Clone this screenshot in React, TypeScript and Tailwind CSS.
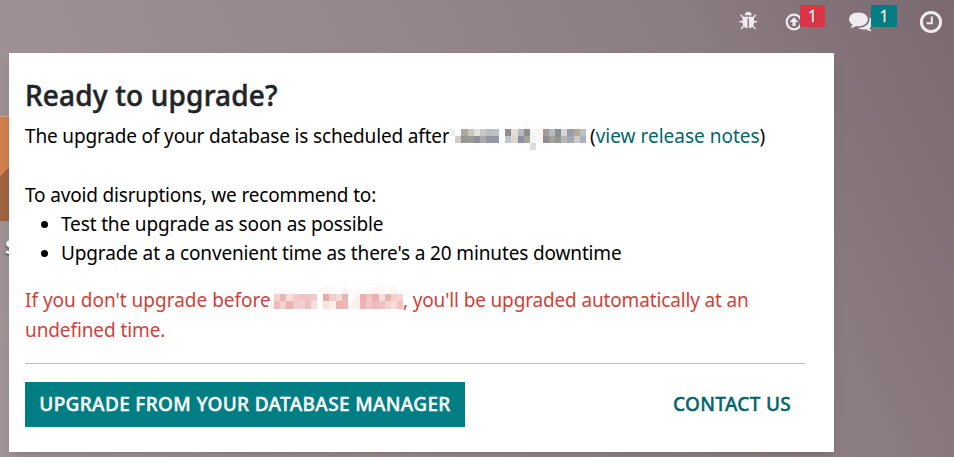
import React from "react";

type RowProps = { cells: string[]; height: string };

function MosaicRow({ cells, height }: RowProps) {
  return (
    <span className={`flex ${height}`}>
      {cells.map((c, i) => (
        <span key={i} className="flex-1" style={{ backgroundColor: c }} />
      ))}
    </span>
  );
}

const W = "#fff";
const T = "transparent";
const greyFaint = [T, T, T, T, T, T, T, T, T, T, T, T, "#fcf9f8", T, T, T, T, T, T, T, T, T];
const greyTop = ["#eeeff4", W, "#a9a9a1", "#c8c7bf", "#e2e0dc", "#c8c8c4", "#b9bcc0", "#bcc3c3", W, "#8d8d8d", "#e1dcd6", "#b6b8be", "#8d8d8d", "#eff7f7", "#fdf5f3", "#a29c98", "#b6bbc1", "#8c8d8e", "#ced7dc", "#9a9ba7", "#b6aa96", "#b8c0c8"];
const greyBottom = [T, "#d0cdc4", "#96978f", "#9d9b95", "#8e8e9b", "#a9abad", "#9496a0", "#9396a8", W, "#c0c6ca", "#dfd8cf", "#8e8da6", "#a6a29c", "#eaf5f6", "#fdf5f3", "#8e8d91", "#a5a29d", "#939493", "#b5b6b0", "#a4a9b8", "#cfcac4", "#a9b0bd"];
const greyTail = [T, T, T, T, T, T, T, T, T, T, T, T, T, "#deddd8", T, T, T, T, T, T, T, T];
const redFaint = [T, "#fffafa", "#fffafa", T, T, T, T, T, T, "#fef6f4", "#fffafa", T, "#fef4f4", T, "#fffafa", T, "#fffafa", "#fef6f6", "#fef8f6", "#fffafa", "#fef6f6", T];
const redTop = [T, "#f5d3cc", "#e9b6b6", "#f9dfda", "#f3c9c9", "#f1c5c8", "#f1c6c8", "#f2caca", W, "#eba9ad", "#f3cccc", "#f7dad2", "#ecb3b5", W, "#fff3f1", "#ecb0b3", "#f1c4c4", "#ecafb2", "#f8dfdf", "#ecb3b5", "#f4d0c9", "#f8d4d6"];
const redBottom = ["#fff8f7", "#eebbbd", "#f4cfcf", "#ecb3b5", "#f3cccc", "#f4cfcf", "#eebfc0", "#f8dede", W, "#f9e1dd", "#fdf0e9", "#ecb3b5", "#edb7b9", "#fdf4f2", "#fdf0e9", "#edb5b7", "#f2c6c6", "#eebabc", "#f0c0c0", "#f4d0cf", "#f8dcd8", "#f0c2c2"];

export default function App() {
  return (
    <div className="relative h-[457px] w-[954px] overflow-hidden bg-[linear-gradient(65deg,#a39497_0%,#94868a_50%,#8a7b80_78%,#7a6971_100%)] font-['Noto_Sans',sans-serif]">
      <header className="absolute left-[739px] top-0 text-[#efebee]">
        <svg viewBox="0 0 1792 1792" className="absolute left-0 top-[11px] size-[20px]" fill="currentColor">
          <path d="M1632 960q0 26-19 45t-45 19h-224q0 171-67 290l208 209q19 19 19 45t-19 45q-18 19-45 19t-45-19l-198-197q-5 5-15 13t-42 28.5-65 36.5-82 29-97 13v-896h-128v896q-51 0-101.5-13.5t-87-33-66-39-43.5-32.5l-15-14-183 207q-20 21-48 21-24 0-43-16-19-18-20.5-44.5t15.5-46.5l202-227q-58-114-58-274h-224q-26 0-45-19t-19-45 19-45 45-19h224v-294l-173-173q-19-19-19-45t19-45 45-19 45 19l173 173h844l173-173q19-19 45-19t45 19 19 45-19 45l-173 173v294h224q26 0 45 19t19 45zm-480-576h-640q0-133 93.5-226.5t226.5-93.5 226.5 93.5 93.5 226.5z" />
        </svg>
        <svg viewBox="0 0 18 18" className="absolute left-[46px] top-[13px] size-[18px]" fill="none" stroke="currentColor">
          <circle cx="9" cy="9" r="7.3" strokeWidth="2.2" />
          <path d="M9 4.2 13.3 9H10.5V13H7.5V9H4.7Z" fill="currentColor" stroke="none" />
        </svg>
        <span className="absolute left-[61px] top-[5px] flex h-[22px] w-[25px] items-center justify-center bg-[#dc3545] text-[16px] leading-none [text-shadow:1px_1px_0_rgba(0,0,0,0.35)] [-webkit-text-stroke:0.3px]">1</span>
        <svg viewBox="0 0 1792 1792" className="absolute left-[110px] top-[9px] size-6" fill="currentColor">
          <path d="M1408 768q0 139-94 257t-256.5 186.5-353.5 68.5q-86 0-176-16-124 88-278 128-36 9-86 16h-3q-11 0-20.5-8t-11.5-21q-1-3-1-6.5t.5-6.5 2-6l2.5-5 3.5-5.5 4-5 4.5-5 4-4.5q5-6 23-25t26-29.5 22.5-29 25-38.5 20.5-44q-124-72-195-177t-71-224q0-139 94-257t256.5-186.5 353.5-68.5 353.5 68.5 256.5 186.5 94 257zm384 256q0 120-71 224.5t-195 176.5q10 24 20.5 44t25 38.5 22.5 29 26 29.5 23 25q1 1 4 4.5t4.5 5 4 5 3.5 5.5l2.5 5 2 6 .5 6.5-1 6.5q-3 14-13 22t-22 7q-50-7-86-16-154-40-278-128-90 16-176 16-271 0-472-132 58 4 88 4 161 0 309-45t264-129q125-92 192-212t67-254q0-77-23-152 129 71 204 178t75 230z" />
        </svg>
        <span className="absolute left-[132px] top-[5px] flex h-[22px] w-[26px] items-center justify-center bg-[#017e84] text-[16px] leading-none [text-shadow:1px_1px_0_rgba(0,0,0,0.35)] [-webkit-text-stroke:0.3px]">1</span>
        <svg viewBox="0 0 24 24" className="absolute left-[180px] top-[10px] size-6" fill="none" stroke="currentColor">
          <circle cx="12" cy="12" r="9.6" strokeWidth="3" />
          <path d="M12.8 6.5v6.7H7.5" strokeWidth="2" />
        </svg>
      </header>

      <div className="absolute left-0 top-[116px] h-[105px] w-[10px] border-t border-[#d9a684] bg-[linear-gradient(135deg,#d28050_0_52%,#a0633f_52%)]" />
      <span className="absolute left-[5px] top-[233px] text-[20px] font-bold leading-[28px] text-white [text-shadow:0_1px_2px_rgba(0,0,0,0.8)]">S</span>

      <main className="absolute left-[9px] top-[53px] h-[399px] w-[825px] bg-white pl-4 pr-[29px] text-[19px] leading-[29px] text-black shadow-lg">
        <h1 className="pt-[23px] text-[28px] font-medium leading-[38px] tracking-[0.17px] text-[#212529] [-webkit-text-stroke:0.5px]">Ready to upgrade?</h1>
        <p className="mt-[8px] flex whitespace-nowrap">
          <span className="w-[424px] tracking-[-0.16px]">The upgrade of your database is scheduled after</span>
          <span className="flex h-[29px] w-[137px] flex-col">
            <MosaicRow cells={greyFaint} height="h-[7px]" />
            <MosaicRow cells={greyTop} height="h-[7px]" />
            <MosaicRow cells={greyBottom} height="h-[7px]" />
            <MosaicRow cells={greyTail} height="h-[7px]" />
          </span>
          <span className="ml-[4px]">(<a className="text-[#01666b]">view release notes</a>)</span>
        </p>
        <p className="mt-[30px] tracking-[-0.17px]">To avoid disruptions, we recommend to:</p>
        <ul className="list-disc pl-9 tracking-[-0.14px]">
          <li>Test the upgrade as soon as possible</li>
          <li>Upgrade at a convenient time as there's a 20 minutes downtime</li>
        </ul>
        <div className="mt-[17px] leading-[30px] text-[#d23f3a]">
          <p className="flex whitespace-nowrap">
            <span className="w-[243px]">If you don't upgrade before</span>
            <span className="mt-[2px] flex h-[28px] w-[135px] flex-col">
              <MosaicRow cells={redFaint} height="h-[7px]" />
              <MosaicRow cells={redTop} height="h-[7px]" />
              <MosaicRow cells={redBottom} height="h-[8px]" />
            </span>
            <span className="tracking-[-0.15px]">, you'll be upgraded automatically at an</span>
          </p>
          <p className="tracking-[-0.1px]">undefined time.</p>
        </div>
        <hr className="mt-[18px] border-[#bbb]" />
        <div className="mt-[18px] flex items-center justify-between font-medium [-webkit-text-stroke:0.4px]">
          <button className="h-[45px] w-[440px] whitespace-nowrap bg-[#017e84] tracking-[0.35px] text-white">UPGRADE FROM YOUR DATABASE MANAGER</button>
          <button className="mr-[14px] tracking-[0.3px] text-[#01666b]">CONTACT US</button>
        </div>
      </main>
    </div>
  );
}
